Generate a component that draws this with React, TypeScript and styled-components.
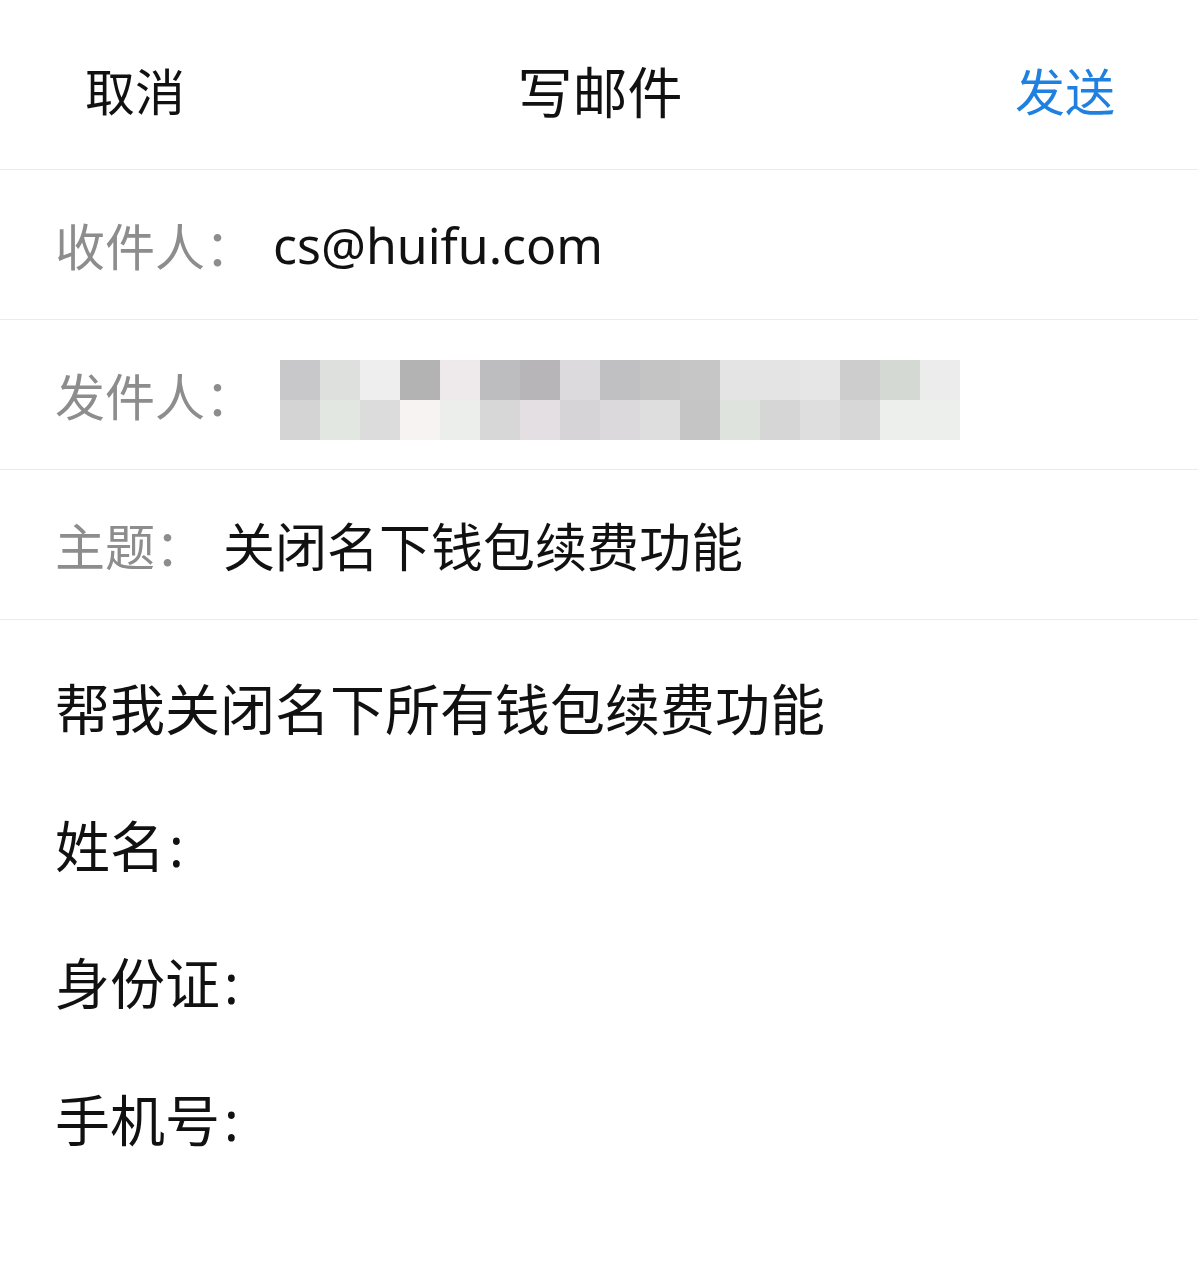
import React from 'react';
import styled, { createGlobalStyle } from 'styled-components';

const GlobalStyle = createGlobalStyle`
  html, body {
    margin: 0;
    padding: 0;
    background: #fff;
  }
  body {
    font-family: "Noto Sans", "Noto Sans CJK SC", sans-serif;
    color: #111;
  }
`;

// 전체 화면
const Page = styled.div`
  width: 1198px;
  min-height: 1268px;
  background: #fff;
`;

// --- 상단 바 ---
const Header = styled.div`
  height: 170px;
  box-sizing: border-box;
  border-bottom: 1px solid #ebebeb;
  padding: 14px 83px 0 85px;
  display: grid;
  grid-template-columns: 1fr auto 1fr;
  align-items: center;
`;

const HeaderButton = styled.div<{ $primary?: boolean; $right?: boolean }>`
  font-size: 50px;
  line-height: 1;
  color: ${(p) => (p.$primary ? '#1f80e0' : '#111')};
  justify-self: ${(p) => (p.$right ? 'end' : 'start')};
`;

const Title = styled.div`
  font-size: 55px;
  line-height: 1;
  color: #111;
`;

// --- 받는사람 / 보내는사람 / 제목 ---
const FieldRow = styled.div`
  height: 149px;
  border-bottom: 1px solid #ebebeb;
  padding-left: 55px;
  display: flex;
  align-items: center;
`;

const FieldLabel = styled.div`
  font-size: 50px;
  color: #8d8d8d;
  margin-right: 18px;
  white-space: nowrap;
`;

const FieldValue = styled.div<{ $size?: number }>`
  font-size: ${(p) => p.$size ?? 50}px;
  color: #111;
  white-space: nowrap;
`;

// 모자이크 처리된 보내는사람
const Mosaic = styled.div`
  display: grid;
  grid-template-columns: repeat(17, 40px);
  grid-template-rows: repeat(2, 40px);
  margin: 11px 0 0 7px;
`;

const MosaicCell = styled.div<{ $c: string }>`
  background: ${(p) => p.$c};
`;

const mosaicColors = [
  '#c8c7c9', '#dde0dc', '#eeeeee', '#b3b3b3', '#eee9eb', '#bdbcbe', '#b7b5b7', '#dcdadd', '#c0bfc1',
  '#c4c4c4', '#c6c6c6', '#e4e4e4', '#e4e4e4', '#e6e6e6', '#cdcdcd', '#d5d9d4', '#ececec',
  '#d4d4d4', '#e3e7e2', '#dcdcdc', '#f7f3f3', '#ebeeeb', '#d6d7d6', '#e3dfe2', '#d6d4d7', '#dcd9dc',
  '#dedede', '#c5c5c5', '#dfe3de', '#d6d6d6', '#dedede', '#d7d7d7', '#ecefeb', '#edefec',
];

// --- 본문 ---
const Body = styled.div`
  padding: 20px 55px 0;
`;

const BodyLine = styled.div`
  font-size: 55px;
  line-height: 137px;
  color: #111;
`;

const Colon = styled.span`
  margin-left: 4px;
`;

const App = () => {
  return (
    <Page>
      <GlobalStyle />
      <Header>
        <HeaderButton>取消</HeaderButton>
        <Title>写邮件</Title>
        <HeaderButton $primary $right>
          发送
        </HeaderButton>
      </Header>
      <FieldRow>
        <FieldLabel>收件人：</FieldLabel>
        <FieldValue>cs@huifu.com</FieldValue>
      </FieldRow>
      <FieldRow>
        <FieldLabel>发件人：</FieldLabel>
        <Mosaic>
          {mosaicColors.map((c, i) => (
            <MosaicCell key={i} $c={c} />
          ))}
        </Mosaic>
      </FieldRow>
      <FieldRow>
        <FieldLabel>主题：</FieldLabel>
        <FieldValue $size={52}>关闭名下钱包续费功能</FieldValue>
      </FieldRow>
      <Body>
        <BodyLine>帮我关闭名下所有钱包续费功能</BodyLine>
        <BodyLine>
          姓名<Colon>:</Colon>
        </BodyLine>
        <BodyLine>
          身份证<Colon>:</Colon>
        </BodyLine>
        <BodyLine>
          手机号<Colon>:</Colon>
        </BodyLine>
      </Body>
    </Page>
  );
};

export default App;
